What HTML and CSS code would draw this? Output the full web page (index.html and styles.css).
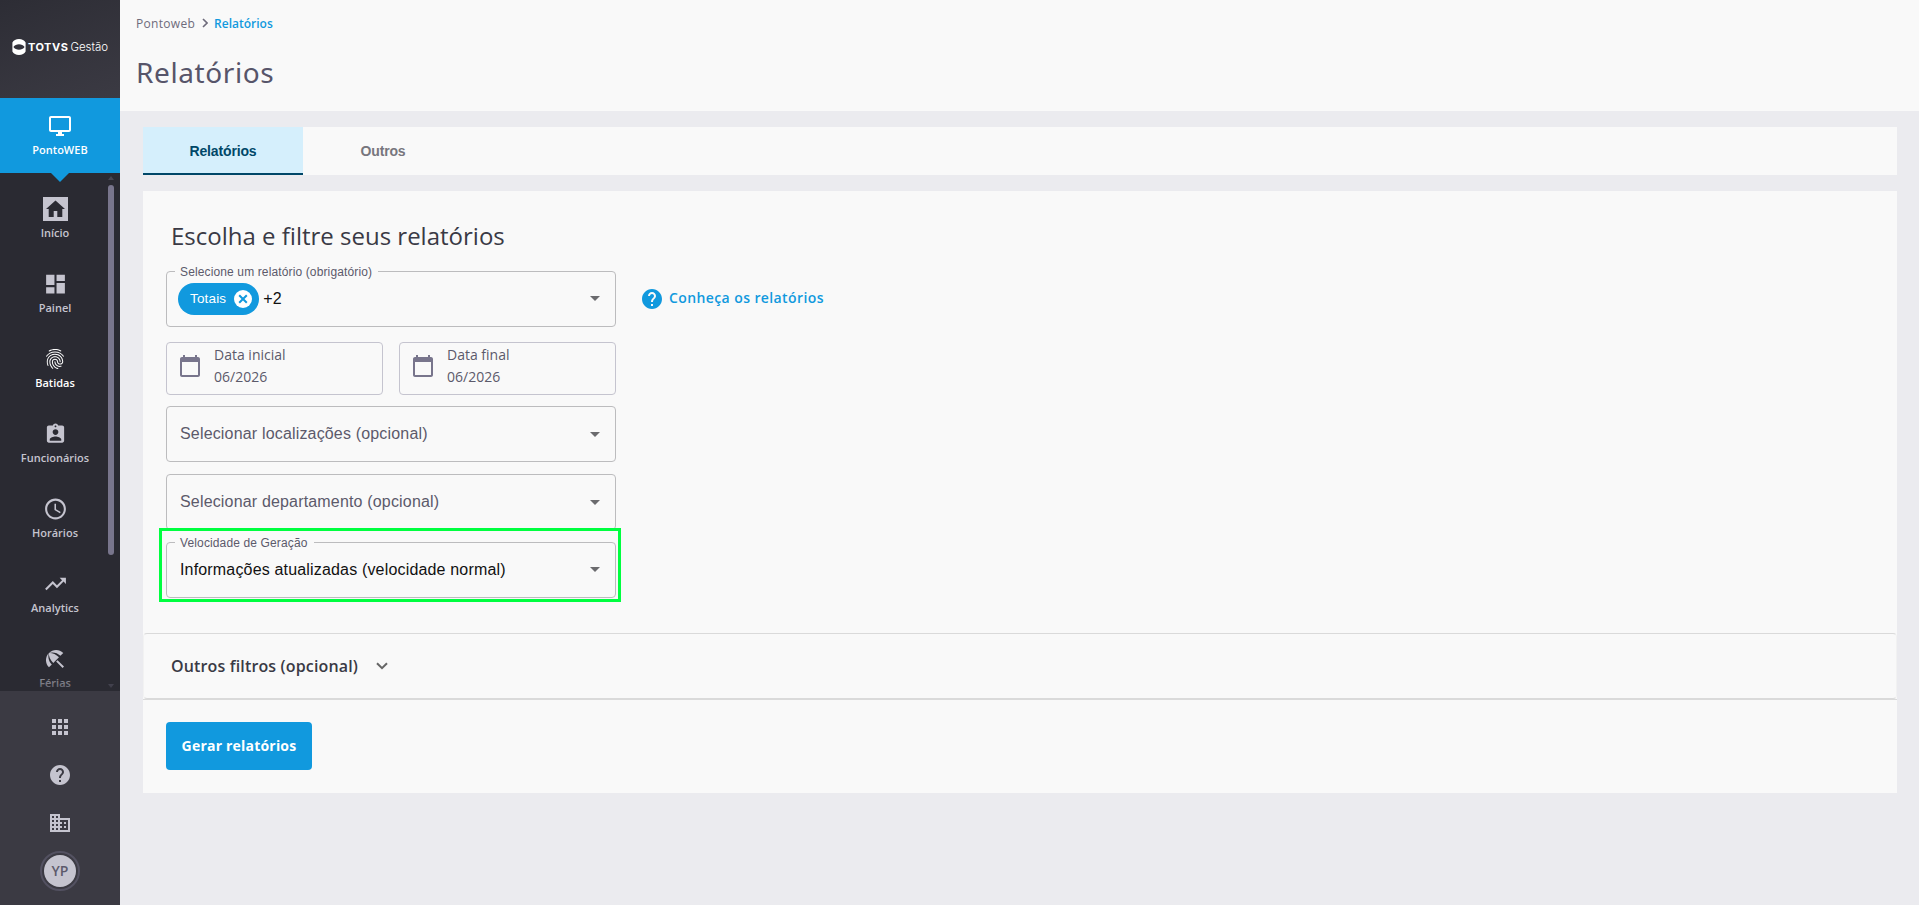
FILE: index.html
```html
<!DOCTYPE html>
<html lang="pt-BR">

<head>
    <meta charset="UTF-8">
    <meta name="viewport" content="width=device-width, initial-scale=1.0">
    <title>Relatórios</title>
    <link rel="stylesheet" href="styles.css">
</head>

<body>
    <aside class="sidebar">
        <div class="brand">
            <svg class="brand-icon" viewBox="0 0 14 16" width="14" height="16">
                <path fill="#fff" fill-rule="evenodd" d="M7 0c3 0 5.500 1.300 6.600 3.500v9C12.500 14.700 10 16 7 16S1.500 14.700.4 12.500v-9C1.500 1.300 4 0 7 0zM1.400 8c1.300 1.800 3.200 2.800 5.600 2.800S11.300 9.800 12.600 8C11.300 6.200 9.400 5.200 7 5.200S2.700 6.200 1.400 8z"/>
            </svg>
            <span class="brand-name">TOTVS</span>
            <span class="brand-product">Gestão</span>
        </div>
        <a class="module">
            <svg viewBox="0 0 24 24" width="24" height="24" fill="currentColor"><path d="M21 2H3c-1.100 0-2 .9-2 2v12c0 1.100.9 2 2 2h7v2H8v2h8v-2h-2v-2h7c1.100 0 2-.9 2-2V4c0-1.100-.9-2-2-2zm0 14H3V4h18v12z"/></svg>
            <span>PontoWEB</span>
        </a>
        <div class="menu-wrap">
            <nav class="menu">
                <a class="menu-item">
                    <svg viewBox="0 0 25 24" width="25" height="24"><path fill="currentColor" fill-rule="evenodd" d="M0 0h25v24H0zM12.500 3.500L3 12h2.700v8h5v-6h3.600v6h5v-8H22z"/></svg>
                    <span>Início</span>
                </a>
                <a class="menu-item">
                    <svg viewBox="0 0 24 24" width="25" height="24" fill="currentColor"><path d="M3 13h8V3H3v10zm0 8h8v-6H3v6zm10 0h8V11h-8v10zm0-18v6h8V3h-8z"/></svg>
                    <span>Painel</span>
                </a>
                <a class="menu-item current">
                    <svg viewBox="0 0 24 24" width="24" height="24" fill="currentColor"><path d="M17.810 4.470c-.08 0-.16-.02-.23-.06C15.660 3.420 14 3 12.010 3c-1.980 0-3.860.47-5.570 1.410-.24.130-.54.040-.68-.2-.13-.24-.04-.55.200-.68C7.820 2.520 9.860 2 12.010 2c2.130 0 3.990.47 6.030 1.520.25.130.34.430.210.670-.9.180-.26.280-.44.280zM3.500 9.720c-.1 0-.2-.03-.29-.09-.23-.16-.28-.47-.12-.7.990-1.400 2.250-2.500 3.750-3.270C9.980 4.040 14 4.030 17.150 5.650c1.500.77 2.760 1.860 3.750 3.250.16.220.110.540-.12.700-.23.160-.54.110-.7-.12-.9-1.260-2.040-2.250-3.390-2.940-2.870-1.470-6.540-1.470-9.400.010-1.360.7-2.500 1.700-3.400 2.960-.8.140-.23.210-.39.210zm6.250 12.070c-.13 0-.26-.05-.35-.15-.87-.87-1.340-1.430-2.010-2.640-.69-1.230-1.050-2.730-1.050-4.340 0-2.970 2.540-5.390 5.660-5.390s5.660 2.420 5.660 5.390c0 .28-.22.500-.5.500s-.5-.22-.5-.5c0-2.420-2.090-4.390-4.660-4.390-2.570 0-4.660 1.970-4.660 4.390 0 1.440.32 2.770.93 3.850.64 1.150 1.080 1.640 1.850 2.420.19.200.19.510 0 .71-.11.100-.24.150-.37.150zm7.170-1.850c-1.190 0-2.240-.3-3.100-.89-1.490-1.010-2.380-2.650-2.380-4.390 0-.28.220-.5.500-.5s.5.220.5.500c0 1.410.72 2.740 1.940 3.560.71.480 1.540.71 2.540.71.240 0 .64-.03 1.040-.1.270-.05.530.13.580.41.050.27-.13.530-.41.580-.57.110-1.070.12-1.210.12zM14.910 22c-.04 0-.09-.01-.13-.02-1.590-.44-2.630-1.030-3.720-2.100-1.400-1.390-2.170-3.240-2.170-5.220 0-1.620 1.380-2.940 3.080-2.940 1.700 0 3.080 1.320 3.080 2.940 0 1.070.93 1.940 2.080 1.940s2.080-.87 2.080-1.940c0-3.770-3.250-6.830-7.250-6.830-2.840 0-5.440 1.580-6.610 4.030-.39.810-.59 1.760-.59 2.800 0 .78.070 2.010.67 3.610.1.260-.03.550-.29.640-.26.100-.55-.04-.64-.29-.49-1.310-.73-2.610-.73-3.960 0-1.200.23-2.290.68-3.240 1.330-2.790 4.280-4.600 7.510-4.600 4.550 0 8.250 3.510 8.250 7.830 0 1.620-1.380 2.940-3.080 2.940s-3.080-1.320-3.080-2.940c0-1.070-.93-1.940-2.080-1.940s-2.080.87-2.080 1.940c0 1.710.66 3.310 1.870 4.510.95.940 1.860 1.460 3.270 1.850.27.070.42.350.35.610-.05.230-.26.380-.47.380z"/></svg>
                    <span>Batidas</span>
                </a>
                <a class="menu-item">
                    <svg viewBox="0 0 24 24" width="23" height="23" fill="currentColor"><path d="M19 3h-4.200C14.400 1.800 13.300 1 12 1s-2.400.8-2.800 2H5c-1.100 0-2 .9-2 2v14c0 1.100.9 2 2 2h14c1.100 0 2-.9 2-2V5c0-1.100-.9-2-2-2zm-7 0c.55 0 1 .45 1 1s-.45 1-1 1-1-.45-1-1 .45-1 1-1zm0 4c1.660 0 3 1.340 3 3s-1.340 3-3 3-3-1.340-3-3 1.340-3 3-3zm6 12H6v-1.400c0-2 4-3.100 6-3.100s6 1.100 6 3.100V19z"/></svg>
                    <span>Funcionários</span>
                </a>
                <a class="menu-item">
                    <svg viewBox="0 0 24 24" width="25" height="25" fill="currentColor"><path d="M11.990 2C6.470 2 2 6.480 2 12s4.470 10 9.990 10C17.520 22 22 17.520 22 12S17.520 2 11.990 2zM12 20c-4.420 0-8-3.580-8-8s3.580-8 8-8 8 3.580 8 8-3.580 8-8 8zm.5-13H11v6l5.250 3.150.75-1.230-4.500-2.670z"/></svg>
                    <span>Horários</span>
                </a>
                <a class="menu-item">
                    <svg viewBox="0 0 24 24" width="25" height="25" fill="currentColor"><path d="M16 6l2.290 2.290-4.880 4.880-4-4L2 16.590 3.410 18l6-6 4 4 6.300-6.290L22 12V6z"/></svg>
                    <span>Analytics</span>
                </a>
                <a class="menu-item">
                    <svg viewBox="0 0 24 24" width="24" height="24" fill="currentColor"><path d="M13.127 14.560l1.430-1.430 6.440 6.443L19.570 21zm4.293-5.730l2.860-2.860c-3.950-3.950-10.350-3.960-14.300-.02 3.930-1.300 8.310-.25 11.440 2.880zM5.950 5.980c-3.940 3.950-3.930 10.350.02 14.300l2.860-2.860C5.700 14.290 4.650 9.910 5.950 5.980zm.02-.02l-.01.010c-.38 3.010 1.170 6.880 4.300 10.020l5.730-5.730c-3.130-3.130-7.010-4.680-10.020-4.300z"/></svg>
                    <span>Férias</span>
                </a>
            </nav>
            <div class="scrollbar">
                <i class="arrow-up"></i>
                <i class="thumb"></i>
                <i class="arrow-down"></i>
            </div>
            <div class="menu-fade"></div>
        </div>
        <div class="sidebar-footer">
            <a><svg viewBox="0 0 24 24" width="24" height="24" fill="currentColor"><path d="M4 8h4V4H4v4zm6 12h4v-4h-4v4zm-6 0h4v-4H4v4zm0-6h4v-4H4v4zm6 0h4v-4h-4v4zm6-10v4h4V4h-4zm-6 4h4V4h-4v4zm6 6h4v-4h-4v4zm0 6h4v-4h-4v4z"/></svg></a>
            <a><svg viewBox="0 0 24 24" width="24" height="24" fill="currentColor"><path d="M12 2C6.480 2 2 6.480 2 12s4.480 10 10 10 10-4.480 10-10S17.520 2 12 2zm1 17h-2v-2h2v2zm2.070-7.750l-.9.920C13.450 12.900 13 13.500 13 15h-2v-.5c0-1.100.45-2.100 1.170-2.830l1.240-1.260c.37-.36.590-.86.590-1.410 0-1.100-.9-2-2-2s-2 .9-2 2H8c0-2.210 1.790-4 4-4s4 1.790 4 4c0 .88-.36 1.680-.93 2.250z"/></svg></a>
            <a><svg viewBox="0 0 24 24" width="24" height="24" fill="currentColor"><path d="M12 7V3H2v18h20V7H12zM6 19H4v-2h2v2zm0-4H4v-2h2v2zm0-4H4V9h2v2zm0-4H4V5h2v2zm4 12H8v-2h2v2zm0-4H8v-2h2v2zm0-4H8V9h2v2zm0-4H8V5h2v2zm10 12h-8v-2h2v-2h-2v-2h2v-2h-2V9h8v10zm-2-8h-2v2h2v-2zm0 4h-2v2h2v-2z"/></svg></a>
            <a class="avatar"><span>YP</span></a>
        </div>
    </aside>

    <main class="page">
        <header class="page-header">
            <div class="breadcrumb">
                <span>Pontoweb</span>
                <svg viewBox="0 0 6 10" width="6" height="10"><path d="M1 1l4 4-4 4" fill="none" stroke="#6e6b7b" stroke-width="1.600"/></svg>
                <a>Relatórios</a>
            </div>
            <h1>Relatórios</h1>
        </header>

        <div class="tabs">
            <a class="tab active">Relatórios</a>
            <a class="tab">Outros</a>
        </div>

        <section class="card">
            <div class="filters">
                <h2>Escolha e filtre seus relatórios</h2>
                <div class="report-row">
                    <fieldset class="select">
                        <legend>Selecione um relatório (obrigatório)</legend>
                        <div class="select-value with-chip">
                            <span class="chip">Totais
                                <svg viewBox="0 0 18 18" width="18" height="18"><circle cx="9" cy="9" r="9" fill="#fff"/><path d="M5.200 5.200l7.600 7.600M12.800 5.200l-7.600 7.600" stroke="#1199de" stroke-width="2"/></svg>
                            </span>
                            <span class="more">+2</span>
                            <i class="caret"></i>
                        </div>
                    </fieldset>
                    <a class="help-link">
                        <svg viewBox="2 2 20 20" width="20" height="20" fill="currentColor"><path d="M12 2C6.480 2 2 6.480 2 12s4.480 10 10 10 10-4.480 10-10S17.520 2 12 2zm1 17h-2v-2h2v2zm2.070-7.750l-.9.920C13.450 12.900 13 13.500 13 15h-2v-.5c0-1.100.45-2.100 1.170-2.830l1.240-1.260c.37-.36.590-.86.590-1.410 0-1.100-.9-2-2-2s-2 .9-2 2H8c0-2.210 1.790-4 4-4s4 1.790 4 4c0 .88-.36 1.680-.93 2.250z"/></svg>
                        <span>Conheça os relatórios</span>
                    </a>
                </div>
                <div class="dates">
                    <div class="date">
                        <svg viewBox="0 0 20 22" width="20" height="22" fill="#78758c"><path d="M18 2h-1V0h-2v2H5V0H3v2H2C.9 2 0 2.900 0 4v16c0 1.100.9 2 2 2h16c1.100 0 2-.9 2-2V4c0-1.100-.9-2-2-2zm0 18H2V7h16v13z"/></svg>
                        <div class="date-text">
                            <span>Data inicial</span>
                            <span class="date-value">06/2026</span>
                        </div>
                    </div>
                    <div class="date">
                        <svg viewBox="0 0 20 22" width="20" height="22" fill="#78758c"><path d="M18 2h-1V0h-2v2H5V0H3v2H2C.9 2 0 2.900 0 4v16c0 1.100.9 2 2 2h16c1.100 0 2-.9 2-2V4c0-1.100-.9-2-2-2zm0 18H2V7h16v13z"/></svg>
                        <div class="date-text">
                            <span>Data final</span>
                            <span class="date-value">06/2026</span>
                        </div>
                    </div>
                </div>
                <div class="select plain">
                    <div class="select-value">
                        <span>Selecionar localizações (opcional)</span>
                        <i class="caret"></i>
                    </div>
                </div>
                <div class="select plain">
                    <div class="select-value">
                        <span>Selecionar departamento (opcional)</span>
                        <i class="caret"></i>
                    </div>
                </div>
                <div class="highlight">
                    <fieldset class="select">
                        <legend>Velocidade de Geração</legend>
                        <div class="select-value">
                            <span class="filled">Informações atualizadas (velocidade normal)</span>
                            <i class="caret"></i>
                        </div>
                    </fieldset>
                </div>
            </div>
            <div class="accordion">
                <span>Outros filtros (opcional)</span>
                <svg viewBox="0 0 12 8" width="12" height="8"><path d="M1 1.200l5 5 5-5" fill="none" stroke="#666" stroke-width="2"/></svg>
            </div>
            <div class="actions">
                <button type="button">Gerar relatórios</button>
            </div>
        </section>
    </main>
</body>

</html>
```
FILE: styles.css
```css
* {
    box-sizing: border-box;
}

body {
    margin: 0;
    height: 100vh;
    display: flex;
    overflow: hidden;
    background-color: #ebebef;
    font-family: "Open Sans", sans-serif;
    color: #3a3a45;
}

svg {
    display: block;
    flex: none;
}

.sidebar {
    width: 120px;
    height: 100vh;
    display: flex;
    flex-direction: column;
    flex: none;
    background-color: #2a2a32;
    color: #c5c4cf;
    font-size: 11px;
    font-weight: 600;
}

.brand {
    height: 98px;
    display: flex;
    align-items: center;
    padding: 0 0 4px 12px;
    background: linear-gradient(160deg, #2d2d35, #3b3a43);
    color: #fff;
    font-family: Inter, sans-serif;
    font-size: 11px;
}

.brand-name {
    margin-left: 2px;
    font-weight: 700;
    letter-spacing: 0.5px;
}

.brand-product {
    margin-left: 2px;
    font-size: 11.5px;
    font-weight: 300;
}

.module {
    position: relative;
    z-index: 1;
    height: 75px;
    display: flex;
    flex-direction: column;
    align-items: center;
    padding-top: 16px;
    gap: 4px;
    background-color: #1199de;
    color: #fff;
    line-height: 16px;
}

.module::after {
    content: "";
    position: absolute;
    top: 75px;
    left: 51px;
    border: 9px solid transparent;
    border-top-color: #1199de;
    border-bottom: 0;
}

.menu-wrap {
    position: relative;
    flex: 1;
    display: flex;
    overflow: hidden;
}

.menu {
    width: 110px;
    padding-top: 18px;
}

.menu-item {
    height: 75px;
    display: flex;
    flex-direction: column;
    align-items: center;
    line-height: 16px;
}

.menu-item svg {
    height: 36px;
}

.menu-item span {
    margin-top: -2px;
}

.menu-item.current {
    color: #fff;
}

.scrollbar {
    position: absolute;
    top: 3px;
    bottom: 3px;
    left: 108px;
    width: 6px;
    display: flex;
    flex-direction: column;
}

.thumb {
    height: 370px;
    margin: 5px 0 auto;
    border-radius: 3px;
    background-color: #78758c;
}

.arrow-up,
.arrow-down {
    border: 3px solid transparent;
}

.arrow-up {
    border-top: 0;
    border-bottom: 4px solid #474652;
}

.arrow-down {
    border-bottom: 0;
    border-top: 4px solid #5c5a6b;
}

.menu-fade {
    position: absolute;
    left: 0;
    right: 0;
    bottom: 0;
    height: 24px;
    background: linear-gradient(rgba(42, 42, 50, 0), rgba(42, 42, 50, 0.7));
}

.sidebar-footer {
    height: 214px;
    display: flex;
    flex-direction: column;
    align-items: center;
    padding-top: 12px;
    background-color: #3b3a43;
}

.sidebar-footer a {
    height: 48px;
    display: flex;
    align-items: center;
}

.sidebar-footer .avatar {
    width: 40px;
    height: 40px;
    margin-top: 4px;
    justify-content: center;
    border: 2px solid #535161;
    border-radius: 50%;
}

.avatar span {
    width: 32px;
    height: 32px;
    border-radius: 50%;
    background-color: #c5c4cf;
    color: #5c5a6b;
    font-size: 14px;
    font-weight: 600;
    line-height: 32px;
    text-align: center;
}

.page {
    flex: 1;
}

.page-header {
    height: 111px;
    padding: 14px 16px 0;
    background-color: #f9f9f9;
}

.breadcrumb {
    display: flex;
    align-items: center;
    height: 18px;
    gap: 7px;
    font-size: 12px;
    font-weight: 500;
    letter-spacing: 0.3px;
    color: #6e6b7b;
}

.breadcrumb a {
    margin-left: -1px;
    font-weight: 600;
    letter-spacing: 0;
    color: #1199de;
}

h1 {
    margin: 21px 0 0;
    font-family: "Noto Sans", sans-serif;
    font-size: 28px;
    font-weight: 400;
    line-height: 38px;
    letter-spacing: 0.6px;
    color: #57556a;
}

.tabs {
    height: 48px;
    display: flex;
    margin: 16px 22px 16px 23px;
    background-color: #f9f9f9;
}

.tab {
    width: 160px;
    line-height: 49px;
    text-align: center;
    font-family: "Liberation Sans", Arial, sans-serif;
    font-size: 14px;
    font-weight: 700;
    letter-spacing: -0.15px;
    color: #77767d;
}

.tab.active {
    background-color: #d5effc;
    border-bottom: 2px solid #004768;
    color: #004768;
}

.card {
    height: 602px;
    margin: 0 22px 0 23px;
    background-color: #f9f9f9;
}

.filters {
    height: 442px;
    padding: 27px 23px 0;
}

h2 {
    margin: 0 0 13px 5px;
    font-size: 24px;
    font-weight: 400;
    line-height: 36px;
    color: #3a3a45;
}

.report-row {
    display: flex;
    align-items: center;
    gap: 26px;
}

.select {
    width: 450px;
    height: 60px;
    margin: 0;
    padding: 0 13px;
    min-width: 0;
    border: 1px solid #bcbcbe;
    border-radius: 4px;
    font-family: "Liberation Sans", Arial, sans-serif;
    font-size: 16px;
    letter-spacing: 0.17px;
}

.select.plain {
    height: 56px;
    margin-bottom: 12px;
}

legend {
    height: 8px;
    margin-left: -5px;
    padding: 0 6px 0 5px;
    font-size: 12px;
    line-height: 10px;
    letter-spacing: 0.13px;
    color: #5c5a6b;
}

.select-value {
    height: 54px;
    display: flex;
    align-items: center;
    color: #5c5a6b;
}

fieldset .select-value {
    height: 47px;
}

.caret {
    margin: 0 2px 0 auto;
    border: 5px solid transparent;
    border-top-color: #6b6b6e;
    border-bottom: 0;
}

.filled,
.more {
    color: #111;
}

.with-chip {
    margin-left: -2px;
}

.chip {
    height: 32px;
    display: flex;
    align-items: center;
    gap: 8px;
    padding: 0 7px 0 12px;
    border-radius: 16px;
    background-color: #1199de;
    color: #fff;
    font-size: 13.5px;
}

.more {
    margin-left: 4px;
}

.help-link {
    display: flex;
    align-items: center;
    gap: 7px;
    margin-top: 4px;
    font-size: 14px;
    font-weight: 600;
    letter-spacing: 0.4px;
    color: #1199de;
}

.help-link span {
    margin-top: -3px;
}

.dates {
    display: flex;
    gap: 16px;
    margin: 15px 0 11px;
}

.date {
    width: 217px;
    height: 53px;
    display: flex;
    gap: 14px;
    padding: 1px 13px;
    border: 1px solid #c5c4cf;
    border-radius: 4px;
    color: #5c5a6b;
}

.date svg {
    margin-top: 11px;
}

.date-text {
    display: flex;
    flex-direction: column;
    font-size: 14px;
    line-height: 22px;
}

.highlight {
    width: 462px;
    height: 74px;
    margin: -14px 0 0 -7px;
    padding: 7px 4px;
    position: relative;
    border: 3px solid #00ff40;
}

.accordion {
    height: 66px;
    display: flex;
    align-items: center;
    gap: 18px;
    padding-left: 27px;
    border: 1px solid #dadada;
    border-left-color: #f2f2f2;
    border-right-color: #f2f2f2;
    border-radius: 4px;
    font-size: 16px;
    font-weight: 600;
    letter-spacing: 0.15px;
}

.actions {
    padding: 22px 23px;
    border-top: 1px solid #dadada;
}

button {
    width: 146px;
    height: 48px;
    padding: 0 0 2px;
    border: 0;
    border-radius: 4px;
    background-color: #1199de;
    color: #fff;
    font-family: "Open Sans", sans-serif;
    font-size: 14px;
    font-weight: 700;
    letter-spacing: 0.2px;
}
```
